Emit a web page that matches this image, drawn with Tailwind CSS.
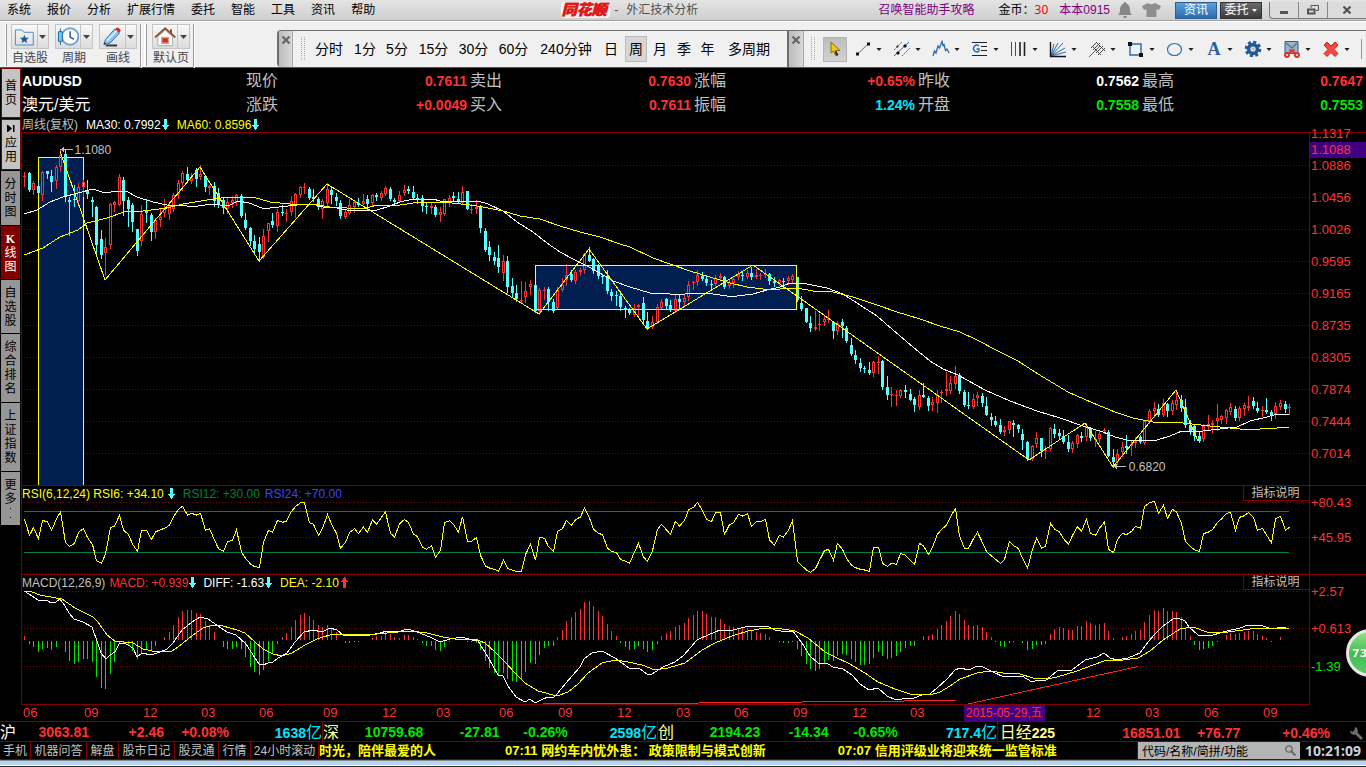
<!DOCTYPE html>
<html lang="zh-CN">
<head>
<meta charset="utf-8">
<meta name="viewport" content="width=device-width, initial-scale=1">
<title>同花顺 - 外汇技术分析</title>
<script src="https://cdn.jsdelivr.net/npm/@tailwindcss/browser@4"></script>
</head>
<body class="bg-black font-['Liberation_Sans','Noto_Sans_CJK_SC',sans-serif] text-[12px] leading-none text-[#c0c0c0]">
<svg class="hidden" aria-hidden="true">
  <defs>
    <symbol id="dn" viewBox="0 0 7 11"><path d="M2 0h3v6h2v1H6v1H5v2H4v1H3v-1H2V8H1V7H0V6h2z" fill="currentColor"/></symbol>
    <symbol id="up" viewBox="0 0 7 11"><path d="M3 0h1v1h1v2h1v1h1v1H5v6H2V5H0V4h1V3h1V1h1z" fill="currentColor"/></symbol>
    <symbol id="caret" viewBox="0 0 7 4"><path d="M0 0h7L3.500 4z" fill="currentColor"/></symbol>
    <symbol id="close" viewBox="0 0 10 8"><path d="M1.500 .5l7 7M8.500 .5l-7 7" stroke="currentColor" stroke-width="2.200"/></symbol>
    <symbol id="grip" viewBox="0 0 4 24"><path d="M.5 0v24M3.500 0v24" stroke="#a8a8a8" stroke-dasharray="1 1"/></symbol>
    <linearGradient id="folder" x1="0" y1="0" x2="0" y2="1"><stop offset="0" stop-color="#b8dcfb"/><stop offset="1" stop-color="#6fabe8"/></linearGradient>
  </defs>
</svg>
<div class="flex min-h-screen flex-col overflow-hidden">

<header class="flex h-[21px] items-center justify-between border-b border-[#a0a0a0] bg-linear-to-b from-[#e4e4e4] to-[#cfcfcf] pl-[7px] text-black">
  <nav class="flex gap-4 whitespace-nowrap">
    <button>系统</button><button>报价</button><button>分析</button><button>扩展行情</button><button>委托</button><button>智能</button><button>工具</button><button>资讯</button><button>帮助</button>
  </nav>
  <h1 class="flex items-center gap-1 pl-[6px] whitespace-nowrap text-[#505050]">
    <span class="rounded-sm bg-[#f4f4f4] pr-1 text-[15px] leading-4 font-black italic text-[#dc1c1c] [text-shadow:1px_0_0_#dc1c1c]">同花顺</span>
    <span>-</span><span class="pl-1">外汇技术分析</span>
  </h1>
  <div class="flex items-center whitespace-nowrap">
    <a href="#" class="mr-6 text-[#800080]">召唤智能助手攻略</a>
    <span>金币：</span><span class="mr-[11px] font-['Noto_Sans',sans-serif] text-[#ff0000]">30</span>
    <a href="#" class="mr-2 text-[#800080]">本本0915</a>
    <button aria-label="提醒" class="mr-2.5"><svg class="h-4 w-[14px]" viewBox="0 0 14 16"><path d="M7 0a1.500 1.500 0 0 1 1.500 1.500C11 2.500 12 5 12 8c0 2.500.8 4 2 5H0c1.200-1 2-2.500 2-5 0-3 1-5.500 3.500-6.500A1.500 1.500 0 0 1 7 0zM5 14h4a2 2 0 0 1-4 0z" fill="#868686"/></svg></button>
    <button aria-label="换肤" class="mr-3.5"><svg class="h-[14px] w-[19px]" viewBox="0 0 19 14"><path d="M6 0Q9.500 2.500 13 0l6 3-2 4-2.500-.8V14h-10V6.200L2 7 0 3z" fill="#8e8e8e"/></svg></button>
    <button class="mr-[3px] h-[17px] w-[42px] border border-[#2d5f94] bg-linear-to-b from-[#5aa0dc] to-[#2c6cae] text-white">资讯</button>
    <button class="mr-[7px] flex h-[17px] w-[42px] items-center justify-center gap-1 border border-[#333] bg-linear-to-b from-[#6a6a6a] to-[#3c3c3c] text-white">委托<svg class="h-[3px] w-[5px]"><use href="#caret"/></svg></button>
    <div class="flex h-[17px] divide-x divide-[#888] rounded-bl border-b border-l border-[#777] bg-[#dcdcdc] text-[#555]">
      <button aria-label="最小化" class="flex w-[29px] items-center justify-center"><svg class="h-[10px] w-[10px]" viewBox="0 0 10 10"><path d="M1 7.500h8" stroke="currentColor" stroke-width="3"/></svg></button>
      <button aria-label="还原" class="flex w-[29px] items-center justify-center"><svg class="h-[10px] w-3" viewBox="0 0 12 10" fill="none" stroke="currentColor"><path d="M4 3V.5h7.500v5H9"/><path d="M1 4.500h6.500v4H1z" stroke-width="2"/></svg></button>
      <button aria-label="关闭" class="flex w-[38px] items-center justify-center"><svg class="h-2 w-[10px]"><use href="#close"/></svg></button>
    </div>
  </div>
</header>

<section class="flex h-[47px] border-b border-[#555] border-t border-t-white bg-[#f0f0f0] text-[#444]">
  <div class="flex h-full w-[277px] shrink-0">
    <div class="flex items-start pt-[2px] pl-[5px]">
      <i class="mr-1 h-[42px] w-[2px] border-r border-[#999] bg-white"></i>
      <div class="flex flex-col items-center gap-[3px]">
        <button aria-label="自选股" class="flex h-[25px] w-[38px] items-center border border-[#c4c4c4] bg-linear-to-b from-[#fafafa] to-[#dcdcdc]">
          <svg class="mx-[2px] h-[20px] w-[22px]" viewBox="0 0 22 20"><path d="M1.500 2.500h7l2 2.500h10v13.500h-19z" fill="url(#folder)" stroke="#4a86c4"/><path d="M2 6.500h18" stroke="#e4f3ff"/><path d="M11 7.500l1.300 3.200 3.500.2-2.700 2.200.9 3.400-3-1.900-3 1.900.9-3.400-2.700-2.200 3.500-.2z" fill="#1d5796"/></svg>
          <span class="flex h-full w-3 items-center justify-center border-l border-[#c4c4c4]"><svg class="h-1 w-[7px]"><use href="#caret"/></svg></span>
        </button><span>自选股</span>
      </div>
      <div class="ml-[6px] flex flex-col items-center gap-[3px]">
        <button aria-label="周期" class="flex h-[25px] w-[38px] items-center border border-[#c4c4c4] bg-linear-to-b from-[#fafafa] to-[#dcdcdc]">
          <svg class="mx-[1px] h-[22px] w-[23px]" viewBox="0 0 23 22"><circle cx="13.500" cy="10.500" r="8.500" fill="#fff" stroke="#6fa6d8" stroke-width="2"/><path d="M13.500 5v6l4 2.500" fill="none" stroke="#2565a4" stroke-width="1.600"/><path d="M3.500 2v17" stroke="#2565a4"/><path d="M1.500 5.500h4v10h-4z" fill="#64d0f8" stroke="#2565a4"/></svg>
          <span class="flex h-full w-3 items-center justify-center border-l border-[#c4c4c4]"><svg class="h-1 w-[7px]"><use href="#caret"/></svg></span>
        </button><span>周期</span>
      </div>
      <div class="ml-[6px] flex flex-col items-center gap-[3px]">
        <button aria-label="画线" class="flex h-[25px] w-[38px] items-center border border-[#c4c4c4] bg-linear-to-b from-[#fafafa] to-[#dcdcdc]">
          <svg class="mx-[2px] h-[22px] w-[22px]" viewBox="0 0 22 22"><path d="M4 20h12" stroke="#333" stroke-width="2"/><path d="M2 19l1.500-5L13.500 2.500 18.500 7 8.500 17.500z" fill="#8fc1f0" stroke="#2d6cae"/><path d="M5 15L16 4" stroke="#d4ebff" stroke-width="2"/><path d="M14 2.500L16 1q2.500 0 4 3l-1.500 2.500z" fill="#d32626"/><path d="M2 19l.7-2.500 1.800 1.700z" fill="#222"/></svg>
          <span class="flex h-full w-3 items-center justify-center border-l border-[#c4c4c4]"><svg class="h-1 w-[7px]"><use href="#caret"/></svg></span>
        </button><span>画线</span>
      </div>
      <i class="ml-[3px] h-[44px] w-[2px] border-l border-[#999] bg-white"></i>
      <i class="mr-[5px] ml-[2px] h-[42px] w-[3px] border-r border-[#999] bg-white"></i>
      <div class="flex flex-col items-center gap-[3px]">
        <button aria-label="默认页" class="flex h-[25px] w-[38px] items-center border border-[#c4c4c4] bg-linear-to-b from-[#fafafa] to-[#dcdcdc]">
          <svg class="mx-[1px] h-[22px] w-[23px]" viewBox="0 0 23 22"><path d="M4 10.500L11.500 4 19 10.500V20H4z" fill="#fff" stroke="#aaa"/><path d="M16.500 3h2v4h-2z" fill="#8a4a30"/><path d="M1 11.500L11.500 2 22 11.500" fill="none" stroke="#8a5238" stroke-width="1.800"/><path d="M8 11.500h7v6H8z" fill="#d22d1c" stroke="#d9a08f" stroke-width="1.500"/></svg>
          <span class="flex h-full w-3 items-center justify-center border-l border-[#c4c4c4]"><svg class="h-1 w-[7px]"><use href="#caret"/></svg></span>
        </button><span>默认页</span>
      </div>
      <i class="ml-[3px] h-[44px] w-[2px] border-l border-[#999] bg-white"></i>
    </div>
  </div>

  <div class="mt-2 flex w-[510px] shrink-0 items-center rounded-l-sm border-t border-l-2 border-[#6e6e6e] text-[14px] text-black">
    <button aria-label="关闭周期栏" class="flex h-full w-[14px] justify-center border-r border-[#aaa] bg-linear-to-r from-[#bcbcbc] to-[#d8d8d8] pt-[5px] text-[#666]"><svg class="h-2 w-[10px]"><use href="#close"/></svg></button>
    <svg class="mr-1 ml-2 h-6 w-1"><use href="#grip"/></svg>
    <div class="flex items-center whitespace-nowrap">
      <button class="w-[40px]">分时</button><button class="w-8">1分</button><button class="w-8">5分</button><button class="w-[41px]">15分</button><button class="w-[39px]">30分</button><button class="w-[41px]">60分</button><button class="w-16">240分钟</button><button class="w-[26px]">日</button><button class="ml-px h-[26px] w-[22px] border border-[#bbb] bg-[#d6d6d6]">周</button><button class="w-[26px]">月</button><button class="w-[22px]">季</button><button class="w-[25px]">年</button><button class="w-[58px]">多周期</button>
    </div>
  </div>

  <div class="mt-2 flex flex-1 items-center border-t border-l-2 border-[#6e6e6e]">
    <button aria-label="关闭画线栏" class="flex h-full w-[15px] shrink-0 justify-center border-r border-[#aaa] bg-linear-to-r from-[#bcbcbc] to-[#d8d8d8] pt-[5px] text-[#666]"><svg class="h-2 w-[10px]"><use href="#close"/></svg></button>
    <svg class="mr-2 ml-[7px] h-6 w-1 shrink-0"><use href="#grip"/></svg>
    <button aria-label="选择" class="mr-[7px] flex h-[25px] w-[24px] shrink-0 items-center justify-center border border-[#b4b4b4] bg-linear-to-b from-[#bdbdbd] to-[#d2d2d2]"><svg class="h-4 w-[11px]" viewBox="0 0 11 16"><path d="M1 1v11l2.500-2 2 4.500 2-1-2-4H10z" fill="#f3c614" stroke="#8a6a10"/><path d="M5.500 10.500l2 4" stroke="#222" stroke-width="1.800"/></svg></button>
    <div class="flex text-[#222]">
      <button aria-label="线段" class="flex w-[39px] items-center gap-1"><svg class="h-[18px] w-[18px]" viewBox="0 0 18 18"><path d="M3.500 14L14 4" stroke="#3a74b4"/><path d="M2 12.500h3v3H2zM13 2.500h3v3h-3z" fill="#111"/></svg><svg class="h-[3px] w-1.5"><use href="#caret"/></svg></button>
      <button aria-label="平行线" class="flex w-[39px] items-center gap-1"><svg class="h-[18px] w-[18px]" viewBox="0 0 18 18" stroke="#2d69a8"><path d="M1 16L16 2"/><path d="M1 10L9 2M9 16l8-8" stroke-dasharray="2 1"/><path d="M4 12h2v2H4zM11 5h2v2h-2zM4 6h1v1H4z" fill="#111" stroke="#111"/></svg><svg class="h-[3px] w-1.5"><use href="#caret"/></svg></button>
      <button aria-label="波浪线" class="flex w-[39px] items-center gap-1"><svg class="h-[18px] w-[18px]" viewBox="0 0 18 18" fill="none" stroke="#2d69a8" stroke-width="1.300"><path d="M1 16l1.500-5L4 13l2-7 1.500 2L10 1.500l1 4 1-1 1.500 6L15 9l2 4"/></svg><svg class="h-[3px] w-1.5"><use href="#caret"/></svg></button>
      <button aria-label="黄金分割" class="flex w-[39px] items-center gap-1"><svg class="h-[18px] w-[18px]" viewBox="0 0 18 18" fill="none"><path d="M1 2.500h15M10 6.500h6M10 10.500h6M1 15.500h15" stroke="#222"/><path d="M8 6a3.300 3.300 0 1 0 0 5V9H5.500" stroke="#2d69a8" stroke-width="1.400"/></svg><svg class="h-[3px] w-1.5"><use href="#caret"/></svg></button>
      <button aria-label="周期线" class="flex w-[39px] items-center gap-1"><svg class="h-[18px] w-[18px]" viewBox="0 0 18 18"><path d="M1.500 2v14M5.500 2v14" stroke="#2d5484"/><path d="M10 2v14M14.500 2v14" stroke="#222" stroke-width="1.600"/></svg><svg class="h-[3px] w-1.5"><use href="#caret"/></svg></button>
      <button aria-label="扇形线" class="flex w-[39px] items-center gap-1"><svg class="h-[18px] w-[18px]" viewBox="0 0 18 18" stroke="#2d69a8"><path d="M2 16L5 4M2 16L9 3M2 16L14 3M2 16L16 8M2 16l15-4"/><path d="M1.500 2v14.500H17" fill="none" stroke="#111" stroke-width="1.400"/></svg><svg class="h-[3px] w-1.5"><use href="#caret"/></svg></button>
      <button aria-label="叉线" class="flex w-[39px] items-center gap-1"><svg class="h-[18px] w-[18px]" viewBox="0 0 18 18"><path d="M1 17L12 6" stroke="#2d69a8"/><path d="M3 8l6-6M5 10l7-7M8 13l7-7M10 15l7-7M4 6l9 9M8 2l9 9" stroke="#444"/></svg><svg class="h-[3px] w-1.5"><use href="#caret"/></svg></button>
      <button aria-label="矩形" class="flex w-[39px] items-center gap-1"><svg class="h-[18px] w-[18px]" viewBox="0 0 18 18"><path d="M3 4h11v11H3z" fill="none" stroke="#2d69a8" stroke-width="1.400"/><path d="M1 2h4v4H1zM12 13h4v4h-4z" fill="#111"/></svg><svg class="h-[3px] w-1.5"><use href="#caret"/></svg></button>
      <button aria-label="椭圆" class="flex w-[39px] items-center gap-1"><svg class="h-[18px] w-[18px]" viewBox="0 0 18 18"><ellipse cx="8.500" cy="9.500" rx="7" ry="6" fill="none" stroke="#2d69a8" stroke-width="1.200"/></svg><svg class="h-[3px] w-1.5"><use href="#caret"/></svg></button>
      <button aria-label="文字" class="flex w-[39px] items-center gap-1"><span class="w-[18px] text-center font-['Liberation_Serif',serif] text-[18px] leading-[18px] font-bold text-[#2a5f9e]">A</span><svg class="h-[3px] w-1.5"><use href="#caret"/></svg></button>
      <button aria-label="设置" class="flex w-[39px] items-center gap-1"><svg class="h-[18px] w-[18px]" viewBox="0 0 18 18" fill="none" stroke="#235a96"><circle cx="9" cy="9" r="6.800" stroke-width="3" stroke-dasharray="3 2.340"/><circle cx="9" cy="9" r="4.400" stroke-width="3.600"/><circle cx="9" cy="9" r="1" stroke="#8ab"/></svg><svg class="h-[3px] w-1.5"><use href="#caret"/></svg></button>
      <button aria-label="截图" class="flex w-[39px] items-center gap-1"><svg class="h-[18px] w-[18px]" viewBox="0 0 18 18" fill="none"><path d="M2 1.500h13v12H2z" fill="#9db4c4" stroke="#2d5f9c"/><path d="M3 3l6 5 5-5" stroke="#5d7484" stroke-width="1.400"/><path d="M5 13.500l6.500-4M13 13.500l-6.500-4" stroke="#d63434" stroke-width="2"/><circle cx="4" cy="15" r="2" stroke="#d63434" stroke-width="2"/><circle cx="14" cy="15" r="2" stroke="#d63434" stroke-width="2"/></svg><svg class="h-[3px] w-1.5"><use href="#caret"/></svg></button>
      <button aria-label="删除" class="flex w-[39px] items-center gap-1"><svg class="h-[18px] w-[18px]" viewBox="0 0 18 18"><path d="M2 5l3-3 4 4 4-4 3 3-4 4.500 4 4-3 3-4-4-4 4-3-3 4-4z" fill="#f04a44" stroke="#cc2222"/></svg><svg class="h-[3px] w-1.5"><use href="#caret"/></svg></button>
    </div>
    <i class="h-5 w-px bg-[#999]"></i>
  </div>
</section>

<main class="flex">
  <nav class="flex w-[21px] shrink-0 flex-col gap-px pl-px text-black">
    <button class="flex h-[50px] w-5 items-center justify-center border border-[#800000] bg-[#c4c4c4]"><span class="w-3 leading-[14px] break-all">首页</span></button>
    <button class="flex h-[51px] w-5 flex-col items-center justify-center gap-1 border border-[#800000] bg-[#c4c4c4]"><svg class="h-[7px] w-2" viewBox="0 0 8 7"><path d="M1 0l4 3.500L1 7zM6 0h1.500v7H6zM0 0h1v7H0z"/></svg><span class="w-3 leading-[14px] break-all">应用</span></button>
    <button class="flex h-[54px] w-[19px] items-center justify-center bg-[#969696]"><span class="w-3 leading-[14px] break-all">分时图</span></button>
    <button class="flex h-[53px] w-[19px] items-center justify-center bg-[#800000] text-white"><span class="w-3 text-center leading-[14px] break-all"><b class="font-['Liberation_Serif',serif]">K</b>线图</span></button>
    <button class="flex h-[53px] w-[19px] items-center justify-center bg-[#969696]"><span class="w-3 leading-[14px] break-all">自选股</span></button>
    <button class="flex h-[68px] w-[19px] items-center justify-center bg-[#969696]"><span class="w-3 leading-[14px] break-all">综合排名</span></button>
    <button class="flex h-[68px] w-[19px] items-center justify-center bg-[#969696]"><span class="w-3 leading-[14px] break-all">上证指数</span></button>
    <button class="flex h-[53px] w-[19px] flex-col items-center bg-[#969696] pt-[6px]"><span class="w-3 leading-[14px] break-all">更多</span><svg class="h-4 w-3" viewBox="0 0 12 16"><path d="M5 2h1v1H5zM5 11h1v1H5z"/></svg></button>
  </nav>

  <div class="min-w-0 flex-1">
    <section class="grid grid-cols-6 pt-px pl-px text-[16px]">
      <div class="font-bold text-white"><div class="h-6 text-[14px] leading-6">AUDUSD</div><div class="h-6 leading-6 font-normal">澳元/美元</div></div>
      <dl class="grid grid-cols-2 pr-[3px] leading-6"><dt>现价</dt><dd class="text-right text-[14px] font-bold text-[#ff3232]">0.7611</dd><dt>涨跌</dt><dd class="text-right text-[14px] font-bold text-[#ff3232]">+0.0049</dd></dl>
      <dl class="grid grid-cols-2 pr-[3px] leading-6"><dt>卖出</dt><dd class="text-right text-[14px] font-bold text-[#ff3232]">0.7630</dd><dt>买入</dt><dd class="text-right text-[14px] font-bold text-[#ff3232]">0.7611</dd></dl>
      <dl class="grid grid-cols-2 pr-[3px] leading-6"><dt>涨幅</dt><dd class="text-right text-[14px] font-bold text-[#ff3232]">+0.65%</dd><dt>振幅</dt><dd class="text-right text-[14px] font-bold text-[#00e6ff]">1.24%</dd></dl>
      <dl class="grid grid-cols-2 pr-[3px] leading-6"><dt>昨收</dt><dd class="text-right text-[14px] font-bold text-white">0.7562</dd><dt>开盘</dt><dd class="text-right text-[14px] font-bold text-[#00e600]">0.7558</dd></dl>
      <dl class="grid grid-cols-2 pr-[3px] leading-6"><dt>最高</dt><dd class="text-right text-[14px] font-bold text-[#ff3232]">0.7647</dd><dt>最低</dt><dd class="text-right text-[14px] font-bold text-[#00e600]">0.7553</dd></dl>
    </section>
    <div class="flex h-[15px] items-center pl-px whitespace-nowrap"><span class="w-16">周线(复权)</span><span class="text-white">MA30: 0.7992</span><svg class="mr-2 ml-px h-[11px] w-[7px] text-[#54ffff]"><use href="#dn"/></svg><span class="text-[#ffff00]">MA60: 0.8596</span><svg class="ml-px h-[11px] w-[7px] text-[#54ffff]"><use href="#dn"/></svg></div>

    <section class="flex border-t border-[#800000]">
      <div class="relative min-w-0 flex-1 border-l border-[#800000]">
        <svg class="block h-[352px] w-full" viewBox="22 133 1287 352" preserveAspectRatio="none" shape-rendering="crispEdges" fill="none">
          <path stroke="#800000" stroke-dasharray="1 2" d="M24 165.500H1309M24 197.500H1309M24 229.500H1309M24 261.500H1309M24 293.500H1309M24 325.500H1309M24 357.500H1309M24 389.500H1309M24 421.500H1309M24 453.500H1309"/>
          <path d="M38.500 490V157.500h45V490" fill="#001e50" stroke="#ffff00"/>
          <path d="M535.500 265.500h261v44h-261z" fill="#001e50" stroke="#ffff00"/>
          <g id="candles"></g>
          <path stroke="#ffff00" d="M535.500 265.500h261v44h-261z"/>
          <polyline stroke="#fff" points="24,214 37,210 50,202 63,197 78,193 93,189 105,193 117,191 126,191 137,197 153,202 167,205 187,206 198,206 212,204 228,206 238,201 249,203 262,208 270,208 297,205 312,204 323,207 337,208 347,210 377,210 390,206 400,202 413,199 433,199 440,201 478,201 488,204 503,211 517,222 533,232 547,243 560,252 573,259 587,266 600,273 613,281 630,287 650,293 670,294 680,295 690,293 713,294 727,296 737,296 753,294 767,290 780,287 790,283 807,284 827,288 843,294 860,305 877,316 893,330 913,347 930,361 943,369 958,375 985,390 1010,401 1037,411 1060,418 1083,426 1103,432 1115,437 1127,440 1137,441 1157,440 1170,436 1182,431 1203,431 1220,429 1237,427 1250,421 1267,417 1277,414 1289,414"/>
          <polyline stroke="#ffff00" points="24,255 43,248 60,237 78,230 87,223 107,218 127,211 143,211 167,208 183,204 213,199 230,197 253,197 270,202 290,204 313,204 330,207 363,209 377,205 400,205 420,202 443,202 470,205 483,207 503,211 520,216 540,219 560,226 580,232 600,237 620,244 630,247 653,258 670,264 690,271 710,277 730,283 747,287 763,289 780,289 797,288 813,291 833,292 853,297 877,305 897,312 920,319 940,326 960,332 977,340 998,351 1018,361 1038,374 1068,392 1093,403 1115,412 1133,418 1153,422 1183,423 1210,426 1240,429 1260,429 1277,428 1289,427"/>
          <polyline stroke="#ffff00" points="60,151 105,280 200,167 259,261 327,184 539,314 589,249 647,329 753,265 1029,460 1085,423 1113,467 1176,390 1198,441"/>
          <path stroke="#c0c0c0" d="M60 149.500h13M63.500 147v5M62.500 148v3M1113 466.500h13M1116.500 464v5M1115.500 465v3"/>
        </svg>
        <span class="absolute top-[11px] left-[4%] pl-px leading-3">1.1080</span>
        <span class="absolute top-[328px] left-[86%] leading-3">0.6820</span>
      </div>
      <div class="relative w-[57px] shrink-0 border-l border-[#800000] text-[13px] text-[#ff3232]">
        <div class="-mt-[15px] pl-px leading-8"><p>1.1317</p><p>1.0886</p><p>1.0456</p><p>1.0026</p><p>0.9595</p><p>0.9165</p><p>0.8735</p><p>0.8305</p><p>0.7874</p><p>0.7444</p><p>0.7014</p></div>
        <span class="absolute top-[9px] left-0 w-full bg-[#400080] pl-px leading-4">1.1088</span>
      </div>
    </section>

    <section class="flex border-t border-[#800000]">
      <div class="min-w-0 flex-1 border-l border-[#800000]">
        <div class="flex h-[15px] items-center whitespace-nowrap">
          <span class="text-[#ffff00]">RSI(6,12,24) RSI6: +34.10</span><svg class="mr-2 ml-1 h-[11px] w-[7px] text-[#54ffff]"><use href="#dn"/></svg><span class="mr-[5px] text-[#008040]">RSI12: +30.00</span><span class="text-[#4040ff]">RSI24: +70.00</span>
          <button class="ml-auto h-[15px] w-[66px] border-b border-l border-[#800000] pr-[2px]">指标说明</button>
        </div>
        <svg class="block h-[73px] w-full" viewBox="22 501 1287 73" preserveAspectRatio="none" shape-rendering="crispEdges" fill="none">
          <path stroke="#800000" stroke-dasharray="1 2" d="M24 502.500H1309M24 537.500H1309M24 573.500H1309"/>
          <path stroke="#4040ff" d="M24 511.500H1289"/><path stroke="#008040" d="M24 552.500H1289"/>
          <polyline id="rsi" stroke="#ffff00"/>
        </svg>
      </div>
      <div class="w-[57px] shrink-0 border-l border-[#800000] pt-[10px] pl-px text-[13px] text-[#ff3232]"><p class="mb-[22px] leading-[13px]">+80.43</p><p class="leading-[13px]">+45.95</p></div>
    </section>

    <section class="flex border-t border-[#800000]">
      <div class="min-w-0 flex-1 border-b border-l border-[#800000]">
        <div class="flex h-[15px] items-center whitespace-nowrap">
          <span class="mr-1">MACD(12,26,9)</span><span class="text-[#ff3232]">MACD: +0.939</span><svg class="mr-[7px] ml-px h-[11px] w-[7px] text-[#54ffff]"><use href="#dn"/></svg><span class="text-white">DIFF: -1.63</span><svg class="mr-2 ml-px h-[11px] w-[7px] text-[#54ffff]"><use href="#dn"/></svg><span class="text-[#ffff00]">DEA: -2.10</span><svg class="ml-[2px] h-[11px] w-[7px] text-[#ff3232]"><use href="#up"/></svg>
          <button class="ml-auto h-[15px] w-[66px] border-b border-l border-[#800000] pr-[2px]">指标说明</button>
        </div>
        <svg class="block h-[114px] w-full" viewBox="22 590 1287 114" preserveAspectRatio="none" shape-rendering="crispEdges" fill="none">
          <path stroke="#800000" stroke-dasharray="1 2" d="M24 591.500H1309M24 628.500H1309M24 666.500H1309"/>
          <g id="macd"></g>
          <polyline stroke="#fff" points="24,591 29,594 38,600 47,600 51,603 56,602 60,599 65,606 69,613 74,619 83,622 92,627 97,641 101,653 106,659 110,655 115,652 119,644 124,643 128,645 133,648 137,657 142,653 151,655 160,652 167,649 173,643 182,630 192,622 200,617 208,619 218,626 227,632 236,635 246,644 255,658 259,664 263,665 268,663 273,662 278,658 287,653 295,642 304,632 313,630 322,632 330,628 337,630 343,635 354,636 370,635 380,633 387,631 397,632 408,629 417,632 430,637 440,642 450,639 462,637 472,640 478,641 488,657 498,675 503,676 508,686 516,697 525,702 530,699 535,703 543,699 548,697 553,698 557,694 566,683 580,667 584,659 592,653 602,651 615,658 629,668 640,669 647,674 652,674 663,667 675,662 684,655 697,640 708,635 720,630 725,631 733,630 745,627 767,626 775,630 787,632 793,631 802,643 810,656 818,663 828,664 833,667 843,669 852,675 860,684 869,690 878,688 887,696 896,700 909,698 914,698 922,695 930,694 937,688 947,679 955,670 960,668 969,670 977,666 983,667 993,672 1004,677 1022,676 1032,682 1038,680 1045,681 1057,671 1072,670 1085,660 1097,657 1104,653 1110,658 1117,660 1128,658 1140,653 1149,641 1154,635 1163,626 1173,619 1178,618 1185,621 1189,627 1198,635 1213,635 1227,631 1240,628 1248,625 1260,625 1272,629 1283,627 1289,629"/>
          <polyline stroke="#ffff00" points="24,591 32,592 40,595 56,598 62,599 75,608 93,617 98,622 107,635 115,641 124,642 133,643 143,649 157,652 172,651 178,647 193,635 203,628 213,625 223,626 237,630 245,633 255,642 263,649 273,654 282,656 292,653 305,645 317,639 333,634 347,634 367,635 387,633 410,631 427,633 443,637 455,639 475,639 485,643 495,652 505,662 515,673 525,683 538,691 557,696 568,692 578,684 588,673 602,663 615,660 628,662 642,665 655,670 668,668 685,663 702,650 715,643 732,636 748,631 765,628 782,629 795,631 808,638 825,652 837,658 848,663 865,673 878,682 895,689 910,694 930,695 940,692 950,686 960,679 977,673 990,671 1003,673 1020,674 1033,678 1047,679 1057,677 1077,671 1093,665 1107,660 1123,660 1138,658 1150,651 1163,640 1180,629 1193,627 1207,632 1220,633 1243,630 1258,628 1289,628"/>
          <path stroke="#ff1e1e" d="M543 703.500H595M595 703H699M699 702.500H802M802 701.500H904M904 700.500H956M959 706L1138 666.500"/>
        </svg>
      </div>
      <div class="w-[57px] shrink-0 border-l border-[#800000] pt-[10px] pl-px text-[13px] text-[#ff3232]"><p class="mb-6 leading-[13px]">+2.57</p><p class="mb-[25px] leading-[13px]">+0.613</p><p class="leading-[13px] text-[#00e600]">-1.39</p></div>
    </section>

    <div class="flex h-4 pr-[57px] pl-[2px] text-[13px] leading-4 whitespace-nowrap text-[#ff3232]">
      <span class="w-0 flex-[61]">06</span><span class="w-0 flex-[59]">09</span><span class="w-0 flex-[58]">12</span><span class="w-0 flex-[58]">03</span><span class="w-0 flex-[64]">06</span><span class="w-0 flex-[59]">09</span><span class="w-0 flex-[54]">12</span><span class="w-0 flex-[63]">03</span><span class="w-0 flex-[59]">06</span><span class="w-0 flex-[59]">09</span><span class="w-0 flex-[59]">12</span><span class="w-0 flex-[58]">03</span><span class="w-0 flex-[59]">06</span><span class="w-0 flex-[59]">09</span><span class="w-0 flex-[58]">12</span><span class="w-0 flex-[54]">03</span><span class="w-0 flex-[122] text-[12px]"><span class="inline-block bg-[#400080] px-[2px]">2015-05-29,五</span></span><span class="w-0 flex-[59]">12</span><span class="w-0 flex-[59]">03</span><span class="w-0 flex-[59]">06</span><span class="w-0 flex-[46]">09</span>
    </div>
  </div>
</main>

<section class="grid h-5 grid-cols-[323fr_335fr_340fr_368fr] border-t border-[#800000] text-right text-[14px] leading-[21px] font-bold whitespace-nowrap text-[#ff3232]">
  <div class="flex border-r border-[#800000]"><span class="w-4 text-[16px] font-normal text-white">沪</span><span class="w-0 flex-[73]">3063.81</span><span class="w-0 flex-[75]">+2.46</span><span class="w-0 flex-[65]">+0.08%</span><span class="w-0 flex-[93] text-[#00e6ff]">1638<span class="text-[16px] font-normal">亿</span></span></div>
  <div class="flex border-r border-[#800000] text-[#00e600]"><span class="w-4 text-[16px] font-normal text-[#ffff96]">深</span><span class="w-0 flex-[84]">10759.68</span><span class="w-0 flex-[76]">-27.81</span><span class="w-0 flex-[68]">-0.26%</span><span class="w-0 flex-[89] text-[#00e6ff]">2598<span class="text-[16px] font-normal">亿</span></span></div>
  <div class="flex border-r border-[#800000] text-[#00e600]"><span class="w-4 text-[16px] font-normal text-[#ffff96]">创</span><span class="w-0 flex-[86]">2194.23</span><span class="w-0 flex-[68]">-14.34</span><span class="w-0 flex-[69]">-0.65%</span><span class="w-0 flex-[99] text-[#00e6ff]">717.4<span class="text-[16px] font-normal">亿</span></span></div>
  <div class="flex items-center"><span class="w-[57px] text-[#ffff96]"><span class="text-[16px] font-normal">日经</span>225</span><span class="w-0 flex-[126]">16851.01</span><span class="w-0 flex-[60]">+76.77</span><span class="w-0 flex-[90]">+0.46%</span><button aria-label="设置行情栏" class="flex w-[36px] justify-center pl-4"><svg class="h-[13px] w-[13px]" viewBox="0 0 13 13"><path d="M5 0a4 4 0 0 1 2.500 5.500L13 11l-2 2-5.500-5.500A4 4 0 0 1 0 3.500l2.500 1.500 2-2z" fill="#6e6e6e"/></svg></button></div>
</section>

<footer class="flex h-[19px] border-y border-[#800000] whitespace-nowrap">
  <nav class="flex shrink-0 divide-x divide-[#800000] border-r border-[#800000]">
    <button class="w-[31px]">手机</button><button class="w-14">机器问答</button><button class="w-8">解盘</button><button class="w-14">股市日记</button><button class="w-11">股灵通</button><button class="w-8">行情</button><button class="w-[67px]">24小时滚动</button>
  </nav>
  <div class="flex min-w-0 flex-1 overflow-hidden text-[13px] leading-[18px] font-bold text-[#ffff00]">
    <a href="#" class="mr-[69px]">时光，陪伴最爱的人</a><a href="#" class="mr-[72px]">07:11 网约车内忧外患： 政策限制与模式创新</a><a href="#">07:07 信用评级业将迎来统一监管标准</a>
  </div>
  <label class="flex w-[163px] shrink-0 items-center border-l border-[#800000] bg-[#b4b4b4] pr-1 pl-1 text-[#666]"><input aria-label="代码搜索" value="代码/名称/简拼/功能" class="min-w-0 flex-1 bg-transparent text-black outline-none"><svg class="h-[11px] w-[11px]" viewBox="0 0 11 11" fill="none" stroke="currentColor"><circle cx="4" cy="4" r="3.200" stroke-width="1.300"/><path d="M6.500 6.500l4 4" stroke-width="1.800"/></svg></label>
  <time class="w-[66px] shrink-0 pl-[5px] font-['Noto_Sans',sans-serif] text-[14px] leading-[17px] font-bold text-[#c8d0dc]">10:21:09</time>
</footer>
<div class="h-[5px] border-t border-[#888] bg-[#b4d4f4]"></div>
<div class="flex-1 border-t border-white bg-[#1c2c30]"></div>
</div>

<button aria-label="加速 73" class="fixed top-[629px] -right-[28px] h-12 w-12 rounded-full border-[3px] border-[#e8e8e8] bg-linear-to-b from-[#8fe08a] via-[#3fbf52] to-[#5cc86c] pl-[3px] text-left font-['DejaVu_Sans',sans-serif] text-[11px] font-bold text-white">73</button>

<script>
// Each candle: high, body top, body bottom, low, then u (rise) or d (fall).
const candles = `172 176 176 186u 172 173 190 191d 181 183 190 194u 181 186 193 193d 171 172 195 200u 171 171 174 178d 170 176 182 191d 165 167 181 188u 149 155 167 171u 150 154 197 201d
197 200 202 235d 185 199 200 206d 183 187 201 205u 180 182 187 196u 180 191 194 198d 197 200 202 216d 206 207 245 255d 230 239 255 258d 238 247 253 275u 203 204 245 248u
201 202 205 211u 174 177 205 205u 177 180 201 215d 197 200 209 226d 203 205 222 231d 229 229 251 255d 205 214 241 245u 200 211 213 222d 213 215 232 240d 218 220 232 238u
209 217 220 226u 199 208 213 216u 204 206 214 219u 193 195 209 211u 180 183 194 198u 171 173 183 190u 167 174 180 182d 173 178 181 183u 168 170 179 186d 165 174 177 179u
175 176 187 191d 185 186 188 194u 182 186 201 206d 188 193 204 207d 197 200 208 213d 197 202 209 213u 196 200 203 207u 194 195 202 205u 194 196 216 217d 213 220 228 229d
227 228 241 245d 235 241 249 252d 237 244 252 261d 229 236 257 258u 223 223 231 241u 213 221 225 227d 209 212 226 231u 205 212 213 215d 209 213 214 221u 196 201 212 215u
193 194 205 217u 186 187 195 197u 183 187 188 193u 187 189 198 199d 189 197 199 201d 197 199 207 209d 199 201 209 218u 183 189 203 206u 187 190 195 203d 193 197 201 205d
200 203 216 218d 209 212 217 218u 199 205 213 214u 200 202 207 212u 198 203 205 206d 194 201 204 204u 195 199 204 210d 194 195 203 205u 193 195 197 200d 191 193 198 200u
186 188 194 195u 187 189 199 200d 198 200 202 204d 191 195 201 202u 185 190 193 195u 186 189 191 193d 186 192 198 199d 194 198 200 203d 195 198 206 211d 203 206 207 213d
203 206 208 213u 205 207 215 216d 207 212 215 221u 199 199 214 215u 195 198 203 206u 192 196 198 200d 192 199 202 203d 186 192 203 204u 191 191 209 209d 204 209 210 213u
200 207 209 213u 205 207 228 232d 228 231 250 251d 241 247 255 260d 252 257 261 264d 245 258 267 272d 255 261 273 280u 256 261 287 292d 278 286 293 296d 285 293 299 301d
281 300 301 302u 282 291 297 302u 280 284 287 294u 285 285 311 312d 288 290 311 314u 287 290 291 299u 287 289 302 310d 299 302 311 312d 287 290 308 309u 278 285 290 291u
264 275 280 285u 270 274 280 281d 270 272 281 283u 268 270 272 275u 253 254 270 273u 247 255 261 261d 258 259 271 273d 264 265 276 278d 274 276 277 283d 270 277 291 293d
289 292 296 300d 291 295 296 305d 291 296 307 310d 306 308 309 317d 308 310 313 314d 304 308 315 316u 304 305 307 314u 297 303 320 322d 312 321 328 329d 316 322 327 328u
304 307 322 323u 299 302 308 309u 298 299 306 309d 300 305 310 311d 295 299 311 312u 295 299 302 309d 294 298 302 305u 281 285 297 300u 281 282 283 289u 270 275 282 285u
272 276 279 280d 276 279 283 285d 280 284 285 289d 275 278 284 285u 273 276 278 279u 276 277 287 288d 280 282 286 288u 278 279 283 287u 271 274 277 279u 272 275 276 280d
270 273 277 278u 267 273 277 279d 269 275 277 278u 273 275 276 279u 269 274 275 277u 273 274 281 284d 277 281 283 286d 279 280 283 285u 278 281 282 287d 276 278 281 284u
274 276 280 283u 277 277 300 301d 296 303 309 310d 308 308 322 322d 316 323 328 331d 311 327 329 330u 314 324 325 330u 315 319 322 325u 310 319 320 322u 321 322 331 338d
321 323 331 334u 319 322 326 337d 326 328 341 342d 338 345 354 355d 350 355 360 363d 358 363 368 371d 366 368 369 372d 362 370 373 374d 361 362 373 376u 356 362 363 373u
360 361 387 389d 376 387 395 399d 387 394 395 406u 390 395 396 405u 389 390 396 397u 385 390 392 397d 389 394 400 400d 397 399 405 411d 390 395 407 409u 383 395 397 397d
396 398 406 410d 397 402 405 410u 390 395 403 412u 390 392 393 402u 372 389 391 395u 376 383 391 393u 366 376 384 388u 373 375 391 393d 390 392 405 406d 392 405 406 408d
394 399 407 408u 392 395 398 405u 393 396 403 406d 397 406 415 415d 413 417 420 425d 416 421 425 426d 419 425 432 433d 426 430 432 435u 421 421 430 433u 420 423 425 436d
424 425 429 432d 429 434 440 449d 441 442 459 460d 445 446 459 460u 432 438 444 447u 438 438 451 456d 446 450 451 458u 427 428 449 450u 424 429 434 437d 429 433 436 438d
430 436 442 443d 435 442 449 451d 441 443 449 452u 434 435 444 447u 432 436 438 441d 423 427 437 440u 427 428 438 440d 431 439 440 446u 430 434 439 442u 428 430 431 433u
430 432 456 456d 449 457 462 467d 449 454 462 464u 442 447 452 456u 435 446 448 453d 441 444 446 455u 437 441 443 447u 435 437 442 443d 420 421 443 444u 409 411 421 423u
402 408 411 415u 404 409 415 416d 399 403 415 416u 403 404 411 416d 400 403 411 414u 391 400 405 409u 395 400 408 411d 399 407 425 427d 420 425 432 434d 424 426 436 440d
432 436 441 442d 424 426 439 441u 415 424 427 430u 420 423 425 432u 404 418 421 430u 415 416 420 423u 409 410 418 423u 403 407 412 414u 406 409 418 420d 406 408 418 420u
403 405 409 415u 396 406 408 410u 397 401 406 408d 402 408 411 412d 406 410 411 416u 398 410 412 413d 410 412 416 420d 402 406 414 418u 400 403 407 409u 401 404 409 412d 404 407 408 414u`;
// Line and bar levels below are in thirds of a chart unit, measured down from y = 480.
const rsi = [118,166,143,176,121,126,151,117,96,188,199,190,157,146,173,193,242,250,222,143,138,106,150,164,192,214,151,151,178,156,149,145,136,110,88,79,105,100,105,100,151,146,180,206,214,185,181,149,216,235,252,260,262,187,151,157,121,127,123,94,80,68,68,128,133,166,145,104,132,160,205,187,158,146,161,141,157,119,133,112,96,160,171,132,118,128,162,170,202,208,197,232,212,128,122,133,157,110,184,184,173,226,258,264,268,273,241,265,271,274,274,224,192,241,172,175,200,214,154,146,121,136,119,111,84,114,148,160,164,205,214,218,238,244,250,216,190,231,244,212,148,133,150,163,124,138,122,90,82,67,92,118,125,98,98,163,134,128,103,108,101,139,125,125,118,180,196,166,171,150,122,244,256,270,277,266,241,212,208,241,190,208,235,256,263,268,270,274,202,202,250,259,250,253,220,226,241,254,190,198,223,202,162,149,135,110,86,168,205,205,176,157,188,215,228,238,250,238,184,197,206,235,265,208,175,205,199,130,147,156,176,193,166,140,154,118,160,166,145,126,208,218,178,160,164,154,139,145,80,68,64,100,76,115,88,96,130,185,200,209,215,161,156,149,127,117,100,97,151,112,107,97,112,151,145,165,188,117,109,151,142];
const macd = [468,492,502,516,507,504,511,500,484,516,543,551,546,537,537,546,590,624,627,582,546,492,488,496,512,536,520,510,510,498,484,471,456,436,411,393,390,390,398,402,423,434,457,484,501,507,507,501,507,532,561,576,585,570,543,522,492,471,459,441,419,405,399,408,420,436,441,434,444,456,484,489,489,486,486,484,484,474,468,467,456,462,470,473,466,466,472,477,489,497,499,510,513,500,487,484,484,484,486,487,489,510,543,564,579,588,580,597,603,606,597,576,548,552,525,503,498,498,470,450,423,411,396,387,366,363,378,393,408,432,453,468,488,501,510,507,498,507,516,510,492,468,460,453,441,436,429,414,405,393,393,402,411,411,417,432,438,441,445,445,443,450,456,459,462,471,484,486,489,489,487,507,528,552,567,573,567,552,540,543,528,522,525,537,546,555,555,552,534,516,528,537,534,528,516,504,498,498,484,468,468,462,447,435,423,408,393,402,420,435,438,435,441,456,471,487,498,501,489,486,484,490,510,507,495,495,492,462,447,441,444,450,450,438,438,423,429,435,432,429,453,474,484,471,468,462,453,450,426,405,390,393,384,393,393,396,411,441,468,495,510,507,504,498,487,484,465,460,463,459,456,453,453,462,468,474,486,484,472,484,484];
const col = i => Math.round(24 + i * 4.518);
const rows = candles.match(/\d+ \d+ \d+ \d+[ud]/g);
document.getElementById('candles').innerHTML = rows.map((row, i) => {
  const [hi, top, bottom, lo] = row.slice(0, -1).split(' ').map(Number);
  const x = col(i), rise = row.endsWith('u'), c = rise ? '#ff3232' : '#54ffff';
  if (!rise || bottom - top < 3) {
    return `<path stroke="${c}" d="M${x + .5} ${hi}V${lo + 1}"/><rect x="${x - 1}" y="${top}" width="3" height="${Math.max(bottom - top, 1)}" fill="${c}"/>`;
  }
  return `<path stroke="${c}" d="M${x + .5} ${hi}V${top}M${x + .5} ${bottom}V${lo + 1}M${x - .5} ${top + .5}h2V${bottom - .5}h-2z"/>`;
}).join('');
document.getElementById('rsi').setAttribute('points', rsi.map((v, i) => `${col(i) + .5},${480 + v / 3}`).join(' '));
document.getElementById('macd').innerHTML = macd.map((v, i) => v < 481
  ? `<path stroke="#ff3232" d="M${col(i) + .5} ${480 + Math.round(v / 3) - 320 + 320}V640"/>`.replace(/ (\d+)V640/, () => ` ${480 + Math.round(v / 3)}V640`)
  : `<path stroke="#00e600" d="M${col(i) + .5} 641V${480 + Math.round(v / 3)}"/>`).join('');
</script>
</body>
</html>
